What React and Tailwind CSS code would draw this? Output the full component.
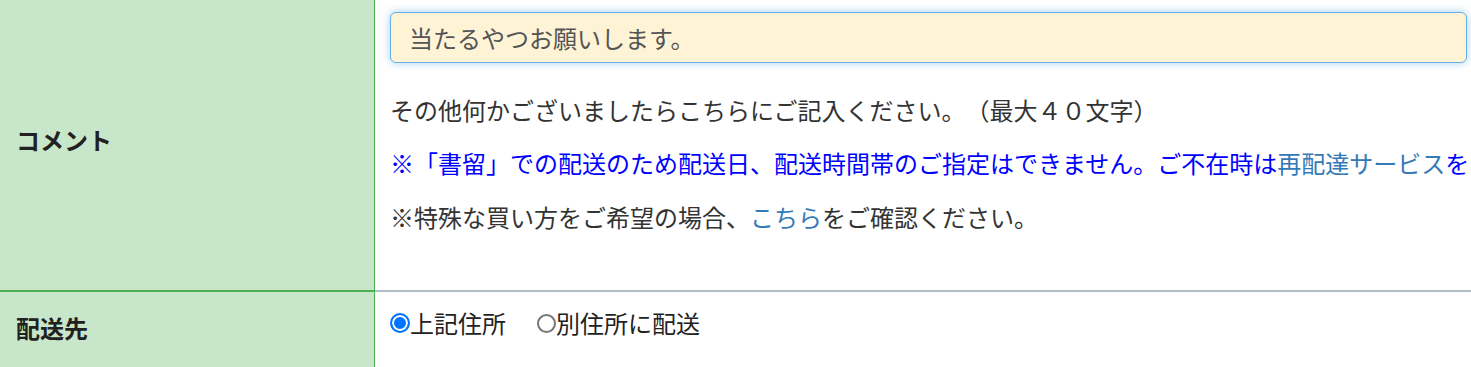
export default function App() {
  return (
    <div className="w-full h-[367px] overflow-hidden bg-white text-[24px] text-[#333] [text-spacing-trim:space-all] font-['Noto_Sans_CJK_JP','Noto_Sans',sans-serif]">
      {/* コメント row */}
      <div className="flex h-[292px]">
        <div className="w-[375px] shrink-0 bg-[#c8e6c9] border-r border-r-[#4caf50] border-b-2 border-b-[#4caf50] flex items-center pl-4 pb-[10px]">
          <span className="font-bold text-[#212121] leading-[36px]">コメント</span>
        </div>
        <div className="flex-1 min-w-0 border-b-2 border-b-[#b0bec5] pl-[15px] pr-1 pt-3">
          <input
            type="text"
            defaultValue="当たるやつお願いします。"
            className="block w-full h-[51px] px-[18px] rounded-[6px] bg-[#fff3d6] text-[#555] border border-[#66afe9] shadow-[0_0_8px_rgba(102,175,233,0.6)] outline-none [text-spacing-trim:space-all]"
          />
          <p className="mt-[29px] leading-[36px] whitespace-nowrap">
            その他何かございましたらこちらにご記入ください。（最大４０文字）
          </p>
          <p className="mt-[17px] leading-[36px] whitespace-nowrap text-[#0000ff]">
            ※「書留」での配送のため配送日、配送時間帯のご指定はできません。ご不在時は
            <a href="#" className="text-[#337ab7]">再配達サービス</a>
            を
          </p>
          <p className="mt-[18px] leading-[36px] whitespace-nowrap">
            ※特殊な買い方をご希望の場合、<a href="#" className="text-[#337ab7]">こちら</a>をご確認ください。
          </p>
        </div>
      </div>

      {/* 配送先 row */}
      <div className="flex h-[80px]">
        <div className="w-[375px] shrink-0 bg-[#c8e6c9] border-r border-r-[#4caf50] pl-4 pt-[18px]">
          <span className="font-bold text-[#212121] leading-[36px]">配送先</span>
        </div>
        <div className="flex-1 min-w-0 pl-[15px] pt-[13px]">
          <div className="flex items-center leading-[36px] text-[#222]">
            <label className="flex items-center">
              <input
                type="radio"
                name="dest"
                defaultChecked
                className="appearance-none shrink-0 m-0 w-[20px] h-[20px] rounded-full border-2 border-[#0075ff] bg-[#0075ff] shadow-[inset_0_0_0_2px_white]"
              />
              <span>上記住所</span>
            </label>
            <label className="flex items-center ml-[31px]">
              <input
                type="radio"
                name="dest"
                className="appearance-none shrink-0 m-0 w-[19px] h-[19px] rounded-full border-2 border-[#767676] bg-white"
              />
              <span>別住所に配送</span>
            </label>
          </div>
        </div>
      </div>
    </div>
  );
}
